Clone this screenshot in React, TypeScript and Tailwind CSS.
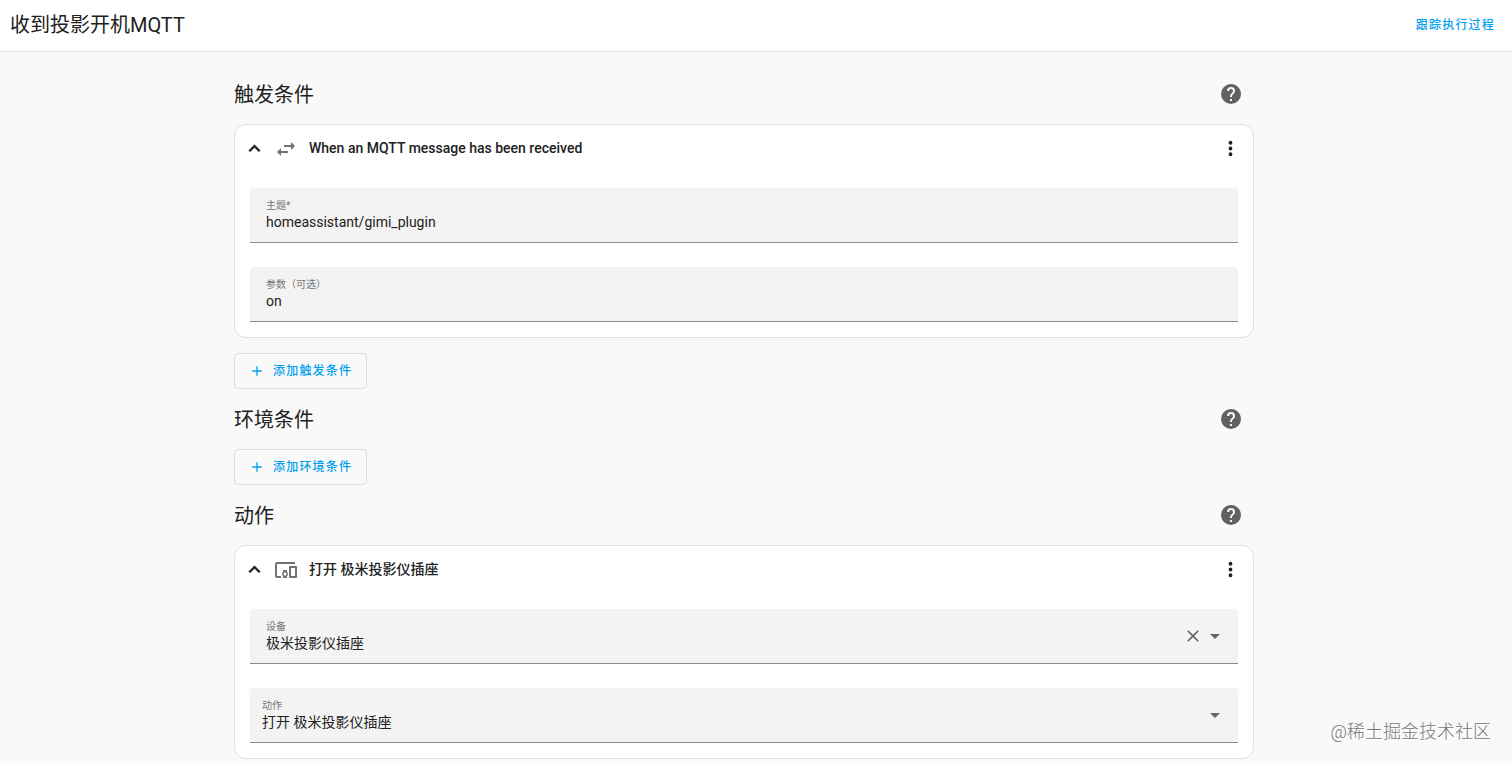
import { useId, useState } from "react";
import type { ReactNode } from "react";

// Material Design icon paths, 24x24 grid
const ICONS = {
  help: "M15.07,11.25L14.17,12.17C13.45,12.89 13,13.5 13,15H11V14.5C11,13.39 11.45,12.39 12.17,11.67L13.41,10.41C13.78,10.05 14,9.55 14,9C14,7.89 13.1,7 12,7A2,2 0 0,0 10,9H8A4,4 0 0,1 12,5A4,4 0 0,1 16,9C16,9.88 15.64,10.67 15.07,11.25M13,19H11V17H13M12,2A10,10 0 0,0 2,12A10,10 0 0,0 12,22A10,10 0 0,0 22,12C22,6.47 17.5,2 12,2Z",
  chevronUp: "M7.41,15.41L12,10.83L16.59,15.41L18,14L12,8L6,14L7.41,15.41Z",
  swap: "M21,9L17,5V8H10V10H17V13M7,11L3,15L7,19V16H14V14H7V11Z",
  devices: "M3 6H21V4H3C1.9 4 1 4.9 1 6V18C1 19.1 1.9 20 3 20H7V18H3V6M13 12H9V13.78C8.39 14.33 8 15.11 8 16C8 16.89 8.39 17.67 9 18.22V20H13V18.22C13.61 17.67 14 16.88 14 16S13.61 14.33 13 13.78V12M11 17.5C10.17 17.5 9.5 16.83 9.5 16S10.17 14.5 11 14.5 12.5 15.17 12.5 16 11.83 17.5 11 17.5M22 8H16C15.5 8 15 8.5 15 9V19C15 19.5 15.5 20 16 20H22C22.5 20 23 19.5 23 19V9C23 8.5 22.5 8 22 8M21 18H17V10H21V18Z",
  dots: "M12,16A2,2 0 0,1 14,18A2,2 0 0,1 12,20A2,2 0 0,1 10,18A2,2 0 0,1 12,16M12,10A2,2 0 0,1 14,12A2,2 0 0,1 12,14A2,2 0 0,1 10,12A2,2 0 0,1 12,10M12,4A2,2 0 0,1 14,6A2,2 0 0,1 12,8A2,2 0 0,1 10,6A2,2 0 0,1 12,4Z",
  plus: "M19,13H13V19H11V13H5V11H11V5H13V11H19V13Z",
  close: "M19,6.41L17.59,5L12,10.59L6.41,5L5,6.41L10.59,12L5,17.59L6.41,19L12,13.41L17.59,19L19,17.59L13.41,12L19,6.41Z",
  menuDown: "M7,10L12,15L17,10H7Z",
};

function Icon({ name, className = "size-6" }: { name: keyof typeof ICONS; className?: string }) {
  return (
    <svg viewBox="0 0 24 24" fill="currentColor" aria-hidden="true" className={`shrink-0 ${className}`}>
      <path d={ICONS[name]} />
    </svg>
  );
}

function SectionHeader({ title }: { title: string }) {
  return (
    <div className="flex h-[60px] items-center justify-between pr-[11px]">
      <h2 className="pt-px text-[20px] leading-7">{title}</h2>
      <button aria-label={`${title}帮助`} className="text-[#616161]">
        <Icon name="help" />
      </button>
    </div>
  );
}

function Card({ icon, title, children }: { icon: "swap" | "devices"; title: string; children: ReactNode }) {
  const [open, setOpen] = useState(true);
  return (
    <div className="rounded-xl border border-[#e0e0e0] bg-white">
      <div className="flex h-[47px] items-center pr-[11px] pl-2">
        <button onClick={() => setOpen(!open)} aria-expanded={open} className="flex flex-1 items-center text-left">
          <Icon name="chevronUp" className={open ? "size-[23px] stroke-current stroke-[0.5]" : "size-[23px] rotate-180 stroke-current stroke-[0.5]"} />
          <Icon name={icon} className="ml-2 size-6 text-[#727272]" />
          <span className="ml-[11px] text-[14px] font-medium">{title}</span>
        </button>
        <button aria-label="更多">
          <Icon name="dots" className="size-[23px]" />
        </button>
      </div>
      {open && <div className="space-y-6 px-[15px] pt-4 pb-[15px]">{children}</div>}
    </div>
  );
}

const fieldBox = "relative flex h-[55px] flex-col rounded-t border-b border-[#8c8c8c] bg-[#f3f3f3] pt-3";
const fieldLabel = "text-[10px] leading-3 text-[#757575]";
const fieldValue = "h-5 w-full appearance-none bg-transparent text-[14px] leading-5 outline-none";

function TextField({ label, value }: { label: string; value: string }) {
  const id = useId();
  return (
    <div className={`${fieldBox} px-4`}>
      <label htmlFor={id} className={fieldLabel}>{label}</label>
      <input id={id} defaultValue={value} className={fieldValue} />
    </div>
  );
}

function SelectField({ label, value, clearable }: { label: string; value: string; clearable?: boolean }) {
  const id = useId();
  const [selected, setSelected] = useState(value);
  return (
    <div className={`${fieldBox} ${clearable ? "px-4" : "px-3"}`}>
      <label htmlFor={id} className={fieldLabel}>{label}</label>
      <select id={id} value={selected} onChange={(e) => setSelected(e.target.value)} className={fieldValue}>
        {clearable && <option value=""></option>}
        <option>{value}</option>
      </select>
      <div className="pointer-events-none absolute inset-y-0 right-[11px] flex items-center text-[#666]">
        {clearable && (
          <button aria-label="清除" onClick={() => setSelected("")} className="pointer-events-auto">
            <Icon name="close" className="size-5" />
          </button>
        )}
        <Icon name="menuDown" />
      </div>
    </div>
  );
}

function AddButton({ children }: { children: string }) {
  return (
    <button className="flex h-9 items-center gap-2 rounded border border-[#dcdcdc] pr-[14px] pl-[14px] text-[12px] font-medium tracking-widest text-[#039fee]">
      <Icon name="plus" className="size-4" />
      {children}
    </button>
  );
}

export default function App() {
  return (
    <div className="relative min-h-screen bg-[#f9f9f9] font-[Roboto,'Noto_Sans_CJK_SC',sans-serif] text-[#212121]">
      <header className="flex h-[52px] items-center justify-between border-b border-[#e0e0e0] bg-white pr-[17px] pb-px pl-[10px]">
        <h1 className="text-[20px] leading-7">收到投影开机MQTT</h1>
        <a href="#trace" className="text-[12px] font-medium tracking-widest text-[#039fee]">跟踪执行过程</a>
      </header>

      <main className="pt-3 pr-6 pb-1">
        <div className="mx-auto max-w-[1020px]">
          <section>
            <SectionHeader title="触发条件" />
            <Card icon="swap" title="When an MQTT message has been received">
              <TextField label="主题*" value="homeassistant/gimi_plugin" />
              <TextField label="参数（可选）" value="on" />
            </Card>
            <div className="mt-[15px]">
              <AddButton>添加触发条件</AddButton>
            </div>
          </section>

          <section>
            <SectionHeader title="环境条件" />
            <AddButton>添加环境条件</AddButton>
          </section>

          <section>
            <SectionHeader title="动作" />
            <Card icon="devices" title="打开 极米投影仪插座">
              <SelectField label="设备" value="极米投影仪插座" clearable />
              <SelectField label="动作" value="打开 极米投影仪插座" />
            </Card>
          </section>
        </div>
      </main>

      <div className="absolute right-[21px] bottom-5 text-[18px] leading-6 font-light text-[#777] [text-shadow:1px_1px_0_#fff]">@稀土掘金技术社区</div>
    </div>
  );
}
